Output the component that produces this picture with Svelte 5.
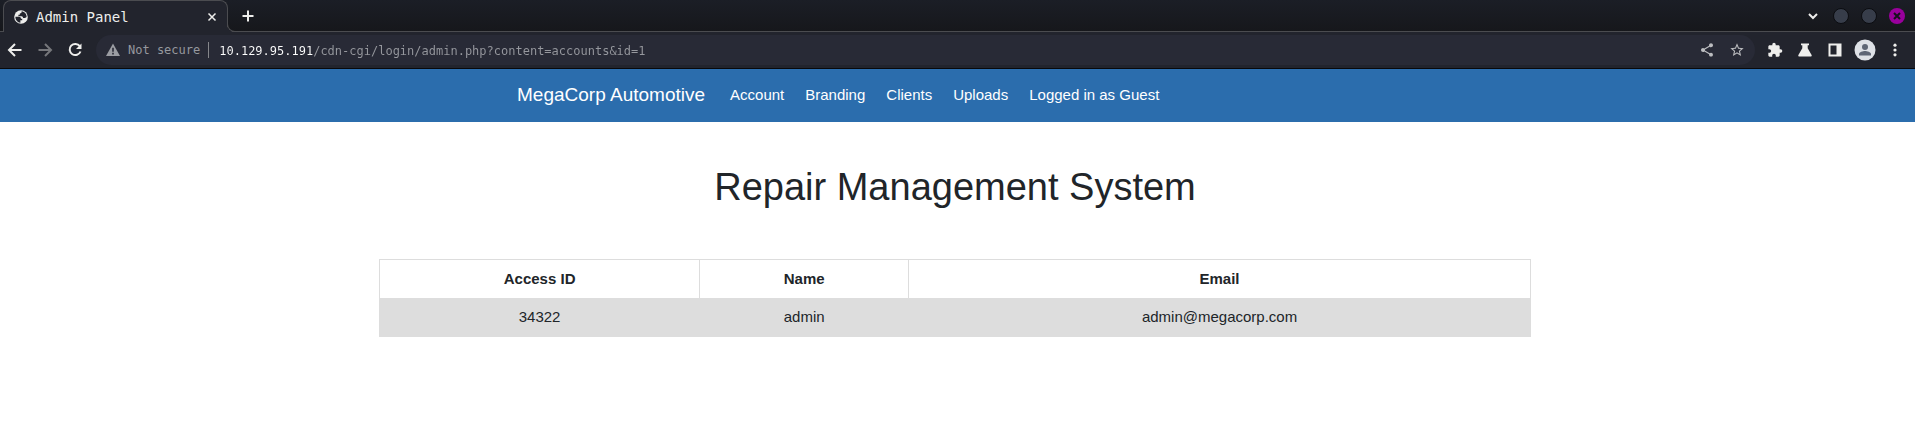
<script>
  let address = $state('10.129.95.191/cdn-cgi/login/admin.php?content=accounts&id=1');
  const links = ['Account', 'Branding', 'Clients', 'Uploads', 'Logged in as Guest'];
  const rows = [{ id: '34322', name: 'admin', email: 'admin@megacorp.com' }];
</script>

<div class="browser">
  <div class="titlebar">
    <div class="tab">
      <svg class="globe" viewBox="0 0 16 16" aria-hidden="true">
        <circle cx="8" cy="8" r="6.800" fill="#eeeeec" />
        <path d="M2.400 7.800h3.400c1.500 0 2.200.8 2.200 2h1.200v1.400H7.400v2.600C4.500 13.500 2.300 11 2.400 7.800zM8.600 2.300c.3 1.500-.4 2-1.800 2.200v1.300H5.400v1.400h3.200c1 0 1.300.8 1.500 1.800h1.800c.8 0 1.200-.5 1.700-.9.200-2.800-1.900-5.300-5-5.800z" fill="#22242d" />
      </svg>
      <span class="tab-title">Admin Panel</span>
      <button class="close-tab" aria-label="Close tab">
        <svg viewBox="0 0 16 16"><path d="m4.500 4.500 7 7m0-7-7 7" /></svg>
      </button>
    </div>
    <button class="new-tab" aria-label="New tab">
      <svg viewBox="0 0 16 16"><path d="M8 2.500v11M2.500 8h11" /></svg>
    </button>
    <div class="window-controls">
      <button aria-label="Search tabs">
        <svg viewBox="0 0 16 16"><path d="m4 6 4 4 4-4" /></svg>
      </button>
      <button aria-label="Minimize"><span class="dot"></span></button>
      <button aria-label="Maximize"><span class="dot"></span></button>
      <button aria-label="Close window">
        <span class="dot close"><svg viewBox="0 0 16 16"><path d="m5 5 6 6m0-6-6 6" /></svg></span>
      </button>
    </div>
  </div>

  <div class="toolbar">
    <button class="tool" aria-label="Back">
      <svg viewBox="0 0 16 16"><path d="M14.500 8H2.500M8 2 2 8l6 6" /></svg>
    </button>
    <button class="tool muted" aria-label="Forward">
      <svg viewBox="0 0 16 16"><path d="M1.500 8h12M8 2l6 6-6 6" /></svg>
    </button>
    <button class="tool" aria-label="Reload">
      <svg viewBox="0 0 16 16"><path d="M12.800 4.200A5.600 5.600 0 1 0 13.500 9.500" /><path d="M14.500 1.500v5.600H9z" fill="#eeeeec" stroke="none" /></svg>
    </button>

    <div class="omnibox">
      <button class="security">
        <svg viewBox="0 0 16 16"><path d="M8 1.500 15 14H1z" fill="#9b9da3" /><path d="M7.200 5.800h1.600v4H7.200zm0 5h1.600v1.600H7.200z" fill="#282a36" /></svg>
        <span>Not secure</span>
      </button>
      <input aria-label="Address" type="text" spellcheck="false" bind:value={address} />
      <button class="tool soft" aria-label="Share">
        <svg viewBox="0 0 24 24"><path d="M18 16.080c-.76 0-1.440.3-1.960.77L8.910 12.700c.05-.23.09-.46.09-.7s-.04-.47-.09-.7l7.050-4.110c.54.5 1.250.81 2.040.81 1.660 0 3-1.340 3-3s-1.340-3-3-3-3 1.340-3 3c0 .24.04.47.09.7L8.040 9.810C7.500 9.310 6.790 9 6 9c-1.660 0-3 1.340-3 3s1.340 3 3 3c.79 0 1.500-.31 2.040-.81l7.120 4.160c-.05.21-.08.43-.08.65 0 1.610 1.310 2.920 2.920 2.920s2.920-1.310 2.920-2.920-1.310-2.920-2.920-2.920z" /></svg>
      </button>
      <button class="tool soft" aria-label="Bookmark this page">
        <svg viewBox="0 0 24 24"><path d="m22 9.240-7.190-.62L12 2 9.190 8.630 2 9.240l5.460 4.730L5.820 21 12 17.270 18.180 21l-1.630-7.030zM12 15.400l-3.760 2.270 1-4.280-3.320-2.880 4.380-.38L12 6.100l1.710 4.040 4.380.38-3.320 2.880 1 4.280z" /></svg>
      </button>
    </div>

    <button class="tool solid" aria-label="Extensions">
      <svg viewBox="0 0 24 24"><path d="M20.500 11H19V7c0-1.100-.9-2-2-2h-4V3.500a2.500 2.500 0 0 0-5 0V5H4c-1.100 0-1.990.9-1.990 2v3.800H3.500c1.490 0 2.700 1.210 2.700 2.700s-1.210 2.700-2.700 2.700H2V20c0 1.100.9 2 2 2h3.800v-1.500c0-1.490 1.210-2.700 2.700-2.700s2.700 1.210 2.700 2.700V22H17c1.100 0 2-.9 2-2v-4h1.500a2.500 2.500 0 0 0 0-5z" /></svg>
    </button>
    <button class="tool solid" aria-label="Labs">
      <svg viewBox="0 0 16 16"><path d="M4 1.500h8v1.800h-1.300v3L14.600 13c.4.900 0 1.500-1 1.500H2.400c-1 0-1.400-.6-1-1.500l3.900-6.700v-3H4z" /></svg>
    </button>
    <button class="tool solid" aria-label="Side panel">
      <svg viewBox="0 0 16 16"><path fill-rule="evenodd" d="M1.500 1.500h13v13h-13zM3.500 3.500v9h6v-9z" /></svg>
    </button>
    <button class="tool avatar" aria-label="Profile">
      <svg viewBox="0 0 22 22"><circle cx="11" cy="11" r="10.500" fill="#dee1e6" /><circle cx="11" cy="8" r="3" fill="#5f6675" /><path d="M5 16.500V15c0-2 4-3 6-3s6 1 6 3v1.500z" fill="#5f6675" /></svg>
    </button>
    <button class="tool solid" aria-label="Menu">
      <svg viewBox="0 0 16 16"><circle cx="8" cy="3.200" r="1.600" /><circle cx="8" cy="8" r="1.600" /><circle cx="8" cy="12.800" r="1.600" /></svg>
    </button>
  </div>
</div>

<nav>
  <a class="brand" href="#home">MegaCorp Automotive</a>
  <ul>
    {#each links as link}
      <li><a href="#{link}">{link}</a></li>
    {/each}
  </ul>
</nav>

<main>
  <h1>Repair Management System</h1>
  <table>
    <thead>
      <tr><th>Access ID</th><th>Name</th><th>Email</th></tr>
    </thead>
    <tbody>
      {#each rows as row}
        <tr><td>{row.id}</td><td>{row.name}</td><td>{row.email}</td></tr>
      {/each}
    </tbody>
  </table>
</main>

<style>
  :global(body) {
    margin: 0;
    background: #fff;
    color: #212529;
    font-family: "Liberation Sans", Arial, sans-serif;
    font-size: 15px;
    line-height: 22px;
  }
  button {
    display: flex;
    align-items: center;
    justify-content: center;
    padding: 0;
    border: 0;
    background: none;
    color: inherit;
    font: inherit;
    flex: none;
  }
  svg {
    display: block;
    width: 16px;
    height: 16px;
    fill: none;
    stroke: #eeeeec;
    stroke-width: 2;
  }
  .browser {
    background: #22242d;
    color: #eeeeec;
    font-family: "DejaVu Sans Mono", monospace;
    border-bottom: 1px solid #08090c;
  }
  .titlebar {
    display: flex;
    align-items: center;
    height: 32px;
    box-sizing: border-box;
    padding: 0 4px 0 3px;
    background: linear-gradient(#1b1e26, #16171b);
    box-shadow: inset 0 -1px #4b4c50;
  }
  .tab {
    position: relative;
    display: flex;
    align-items: center;
    width: 225px;
    height: 32px;
    box-sizing: border-box;
    padding: 0 7px 0 9px;
    gap: 7px;
    border: 1px solid #4b4c50;
    border-bottom: 0;
    border-radius: 8px 8px 0 0;
    background: #22242d;
  }
  .tab::after {
    content: "";
    position: absolute;
    left: 100%;
    bottom: 0;
    width: 8px;
    height: 8px;
    box-sizing: border-box;
    border: solid #4b4c50;
    border-width: 0 0 1px 1px;
    border-bottom-left-radius: 8px;
    box-shadow: -3px 3px #22242d;
    clip-path: inset(0);
  }
  .tab svg {
    stroke-width: 1.500;
  }
  .tab .globe {
    stroke: none;
  }
  .tab-title {
    flex: 1;
    font-size: 14px;
  }
  .new-tab {
    width: 40px;
    height: 30px;
  }
  .window-controls {
    display: flex;
    margin-left: auto;
  }
  .window-controls button {
    width: 28px;
    height: 32px;
  }
  .dot {
    display: flex;
    width: 14px;
    height: 14px;
    border: 1px solid #0b0c10;
    border-radius: 50%;
    background: #373d4a;
  }
  .dot.close {
    width: 16px;
    height: 16px;
    border: 0;
    background: #99009c;
  }
  .dot.close svg {
    stroke: #14101c;
  }
  .toolbar {
    display: flex;
    align-items: center;
    height: 36px;
    padding-right: 5px;
  }
  .tool {
    width: 30px;
    height: 28px;
  }
  .muted svg {
    stroke: #76777b;
  }
  .soft svg {
    fill: #bcbdc0;
    stroke: none;
  }
  .solid svg {
    fill: #eeeeec;
    stroke: none;
  }
  .avatar svg {
    width: 22px;
    height: 22px;
    stroke: none;
  }
  .omnibox {
    display: flex;
    align-items: center;
    flex: 1;
    min-width: 0;
    height: 30px;
    margin: 0 5px 0 6px;
    padding: 0 3px 0 9px;
    border-radius: 15px;
    background: #282a36;
    font-size: 12px;
    box-sizing: border-box;
  }
  .security {
    gap: 7px;
    padding-right: 8px;
    border-right: 1px solid #85868b;
    color: #96989e;
    line-height: 15px;
  }
  .security svg {
    stroke: none;
  }
  input {
    flex: 1;
    min-width: 0;
    height: 30px;
    padding: 2px 0 0 10px;
    border: 0;
    outline: 0;
    box-sizing: border-box;
    background: linear-gradient(90deg, #fff 13ch, #96989e 13ch) content-box;
    -webkit-background-clip: text;
    background-clip: text;
    background-origin: content-box;
    color: transparent;
    caret-color: #fff;
    font: inherit;
  }
  nav {
    display: flex;
    align-items: center;
    gap: 25px;
    min-height: 52px;
    padding: 0 27% 1px;
    background: #2b6dad;
    white-space: nowrap;
  }
  nav a {
    color: #fff;
    text-decoration: none;
  }
  .brand {
    font-size: 19px;
  }
  ul {
    display: flex;
    gap: 21px;
    margin: 0;
    padding: 0;
    list-style: none;
  }
  main {
    padding: 42px 5px 60px 0;
  }
  h1 {
    margin: 0 0 49px;
    font-size: 38px;
    font-weight: 400;
    line-height: 46px;
    text-align: center;
  }
  table {
    width: 1152px;
    max-width: 100%;
    margin: 0 auto;
    border-collapse: collapse;
    text-align: center;
  }
  th {
    padding: 8px;
    border: 1px solid #ddd;
  }
  td {
    padding: 7px 8px 8px;
    border: solid #ddd;
    border-width: 0 1px 1px;
    background: #ddd;
  }
</style>
